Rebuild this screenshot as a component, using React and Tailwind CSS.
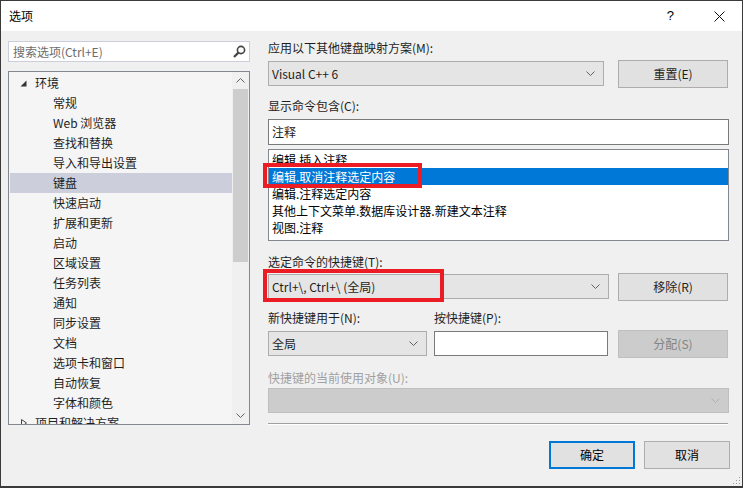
import React from 'react';

const font = "font-['Microsoft_YaHei_UI','Noto_Sans_CJK_SC',sans-serif]";

const treeItems = [
    '常规', 'Web 浏览器', '查找和替换', '导入和导出设置', '键盘', '快速启动', '扩展和更新', '启动',
    '区域设置', '任务列表', '通知', '同步设置', '文档', '选项卡和窗口', '自动恢复', '字体和颜色',
];

const commands = ['编辑.插入注释', '编辑.取消注释选定内容', '编辑.注释选定内容', '其他上下文菜单.数据库设计器.新建文本注释', '视图.注释'];

function Chevron({ color = '#606060', up = false }) {
    return (
        <svg width="9" height="5" viewBox="0 0 9 5" className="shrink-0">
            <polyline points={up ? '0.5,4.5 4.5,0.5 8.5,4.5' : '0.5,0.5 4.5,4.5 8.5,0.5'} fill="none" stroke={color} strokeWidth="1" />
        </svg>
    );
}

function Combo({ text, className = '', disabled = false }) {
    return (
        <div className={`flex items-center border h-[25px] pl-[3px] pr-[8px] ${disabled ? 'bg-[#cccccc] border-[#bfbfbf]' : 'bg-[#e5e5e5] border-[#adadad]'} ${className}`}>
            <span className="flex-1 leading-[16px]">{text}</span>
            <Chevron color={disabled ? '#b0b0b0' : '#606060'} />
        </div>
    );
}

function Button({ children, className = '', disabled = false, primary = false, small = false }) {
    return (
        <div className={`flex items-center justify-center h-[28px] ${small ? 'w-[86px]' : 'w-[110px]'} ${primary ? 'border-2 border-[#0078d7] bg-[#e1e1e1]' : disabled ? 'border border-[#bfbfbf] bg-[#cccccc] text-[#838383]' : 'border border-[#adadad] bg-[#e1e1e1]'} ${className}`}>
            {children}
        </div>
    );
}

export default function App() {
    return (
        <div className={`relative w-[743px] h-[488px] border border-b-2 border-[#3a3a3a] bg-[#f0f0f0] flex flex-col overflow-hidden text-[12px] text-[#1e1e1e] ${font}`}>
            {/* Title bar */}
            <div className="h-[30px] bg-white flex items-center shrink-0">
                <span className="ml-[8px] text-[12px] text-black">选项</span>
                <span className="ml-auto mr-[40px] text-[13px] text-black font-['Liberation_Sans',sans-serif]">?</span>
                <svg width="11" height="11" viewBox="0 0 11 11" className="mr-[17px]">
                    <path d="M0.5 0.5L10.5 10.5M10.5 0.5L0.5 10.5" stroke="#111" strokeWidth="1" />
                </svg>
            </div>

            <div className="flex flex-1">
                {/* Left column */}
                <div className="ml-[7px] w-[242px] flex flex-col">
                    <div className="mt-[10px] h-[21px] bg-white border border-[#cccedb] flex items-center pl-[4px] pr-[3px]">
                        <span className="flex-1 text-[#6d6d6d] leading-[16px]">搜索选项(Ctrl+E)</span>
                        <svg width="13" height="13" viewBox="0 0 13 13">
                            <circle cx="8" cy="5" r="3.6" fill="none" stroke="#444" strokeWidth="1.6" />
                            <path d="M5.4 7.6L1 12" stroke="#444" strokeWidth="2.2" />
                        </svg>
                    </div>

                    <div className="mt-[9px] h-[354px] bg-[#f5f5f5] border border-[#828790] flex overflow-hidden">
                        <div className="flex-1 pt-[1px] pl-[1px]">
                            <div className="h-[20px] flex items-center">
                                <svg width="7" height="7" viewBox="0 0 7 7" className="ml-[10px]">
                                    <polygon points="6.5,0.5 6.5,6.5 0.5,6.5" fill="#333" />
                                </svg>
                                <span className="ml-[8px] leading-[16px]">环境</span>
                            </div>
                            {treeItems.map((t) => (
                                <div key={t} className={`h-[20px] flex items-center pl-[43px] ${t === '键盘' ? 'bg-[#cccedb]' : ''}`}>
                                    <span className="leading-[16px]">{t}</span>
                                </div>
                            ))}
                            <div className="h-[20px] flex items-center">
                                <svg width="6" height="8" viewBox="0 0 6 8" className="ml-[11px]">
                                    <polygon points="0.5,0.5 5.5,4 0.5,7.5" fill="none" stroke="#444" strokeWidth="1" />
                                </svg>
                                <span className="ml-[8px] leading-[16px]">项目和解决方案</span>
                            </div>
                        </div>
                        {/* Scrollbar */}
                        <div className="w-[17px] bg-[#f0f0f0] flex flex-col items-center">
                            <div className="h-[17px] flex items-center justify-center">
                                <Chevron color="#606060" up />
                            </div>
                            <div className="w-[15px] h-[173px] bg-[#cdcdcd]" />
                            <div className="flex-1" />
                            <div className="h-[17px] flex items-center justify-center">
                                <Chevron color="#606060" />
                            </div>
                        </div>
                    </div>
                </div>

                {/* Right column */}
                <div className="ml-[18px] w-[462px] flex flex-col">
                    <div className="mt-[9px] h-[16px] leading-[16px]">应用以下其他键盘映射方案(M):</div>
                    <div className="mt-[4px] flex items-start h-[28px]">
                        <Combo text="Visual C++ 6" className="mt-[1px] w-[336px]" />
                        <Button className="ml-[14px]">重置(E)</Button>
                    </div>

                    <div className="mt-[10px] h-[16px] leading-[16px]">显示命令包含(C):</div>
                    <div className="mt-[5px] h-[26px] w-[461px] bg-white border border-[#7a7a7a] flex items-center pl-[3px]">
                        <span className="leading-[16px]">注释</span>
                    </div>
                    <div className="mt-[4px] h-[92px] w-[461px] bg-white border border-[#828790] pt-[1px]">
                        {commands.map((c, i) => (
                            <div key={c} className={`h-[17px] flex items-center pl-[3px] ${i === 1 ? 'bg-[#0078d7] text-white' : 'text-black'}`}>
                                <span className="leading-[16px]">{c}</span>
                            </div>
                        ))}
                    </div>

                    <div className="mt-[13px] h-[16px] leading-[16px]">选定命令的快捷键(T):</div>
                    <div className="mt-[3px] flex items-start h-[28px]">
                        <Combo text="Ctrl+\, Ctrl+\ (全局)" className="mt-[1px] w-[341px]" />
                        <Button className="ml-[9px]">移除(R)</Button>
                    </div>

                    <div className="mt-[9px] h-[16px] flex leading-[16px]">
                        <span className="w-[166px]">新快捷键用于(N):</span>
                        <span>按快捷键(P):</span>
                    </div>
                    <div className="mt-[4px] flex items-start h-[28px]">
                        <Combo text="全局" className="mt-[1px] w-[159px]" />
                        <div className="ml-[7px] mt-[1px] h-[25px] w-[174px] bg-white border border-[#7a7a7a]" />
                        <Button disabled className="ml-[10px]">分配(S)</Button>
                    </div>

                    <div className="mt-[12px] h-[16px] leading-[16px] text-[#a0a0a0]">快捷键的当前使用对象(U):</div>
                    <Combo disabled text="" className="mt-[2px] w-[461px]" />

                    <div className="mt-[10px] w-[460px] h-[1px] bg-[#a0a0a0]" />
                    <div className="w-[460px] h-[1px] bg-white" />

                    <div className="mt-[16px] flex justify-end gap-[9px] text-black">
                        <Button primary small>确定</Button>
                        <Button small>取消</Button>
                    </div>
                </div>
            </div>

            {/* Resize grip */}
            <svg width="8" height="8" viewBox="0 0 8 8" className="absolute right-[1px] bottom-[1px]">
                <rect x="6" y="0" width="1" height="1" fill="#9a9a9a" />
                <rect x="3" y="3" width="1" height="1" fill="#9a9a9a" />
                <rect x="6" y="3" width="1" height="1" fill="#9a9a9a" />
                <rect x="0" y="6" width="1" height="1" fill="#9a9a9a" />
                <rect x="3" y="6" width="1" height="1" fill="#9a9a9a" />
                <rect x="6" y="6" width="1" height="1" fill="#9a9a9a" />
            </svg>

            {/* Red annotation boxes */}
            <div className="absolute left-[262px] top-[162px] w-[159px] h-[25px] border-4 border-[#ec1c24]" />
            <div className="absolute left-[262px] top-[268px] w-[181px] h-[33px] border-4 border-[#ec1c24]" />
        </div>
    );
}
